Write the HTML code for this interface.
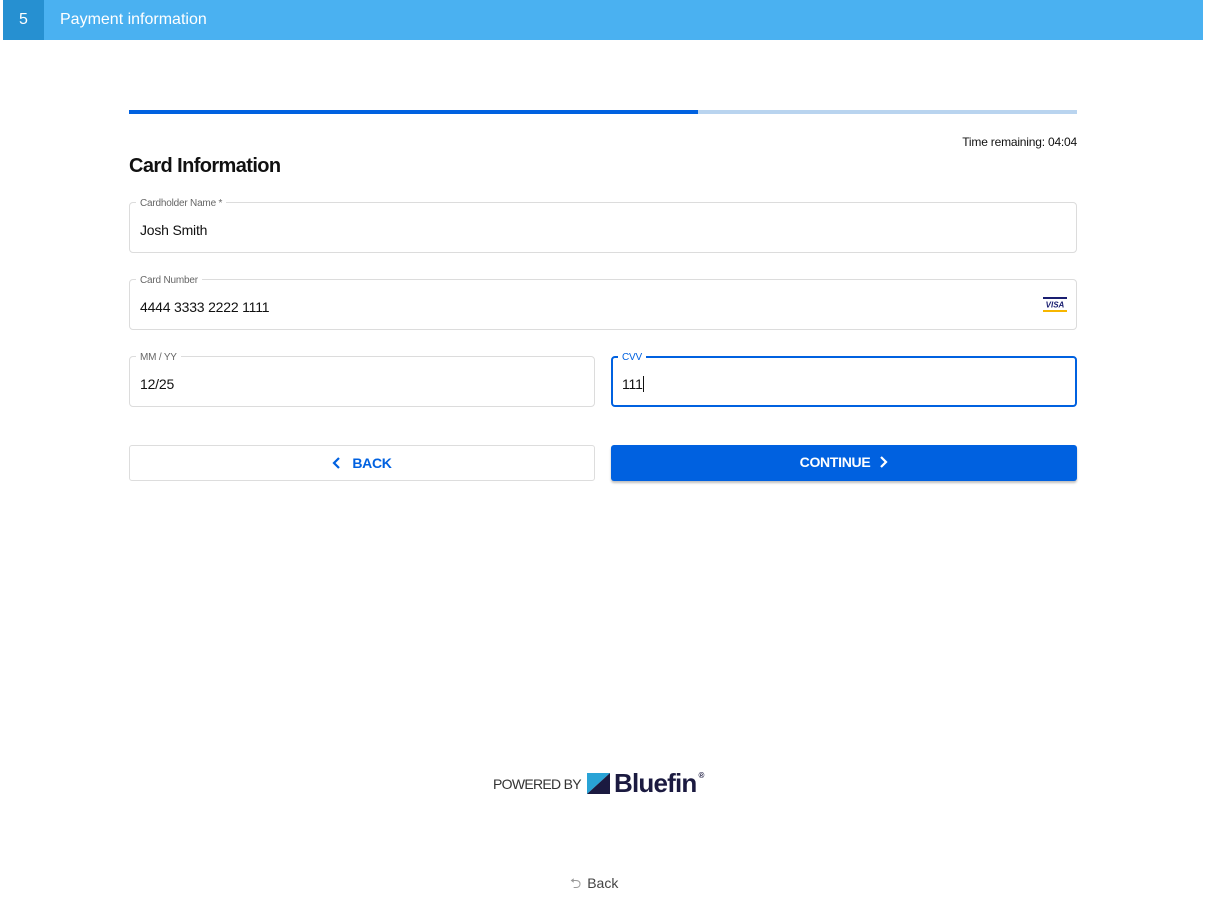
<!DOCTYPE html>
<html><head><meta charset="utf-8"><style>
*{box-sizing:border-box;margin:0;padding:0}
body{width:1211px;height:920px;background:#fff;font-family:"Liberation Sans",Arial,sans-serif;position:relative;overflow:hidden;color:#111}
.hdr{position:absolute;left:3px;top:0;width:1200px;height:40px;background:#4ab1f1}
.num{position:absolute;left:0;top:0;width:41px;height:40px;background:#2690d1;color:#fff;font-size:16px;line-height:40px;text-align:center}
.ttl{position:absolute;left:57px;top:0;line-height:40px;color:#fff;font-size:16px}
.prog{position:absolute;left:129px;top:110px;width:948px;height:4px;background:#b9d4ef}
.prog div{width:569px;height:4px;background:#0061e0}
.time{position:absolute;right:134px;top:135px;font-size:12px;color:#111;letter-spacing:-0.2px}
h2{position:absolute;left:129px;top:155px;font-size:20px;font-weight:bold;color:#111;letter-spacing:-0.6px}
.f{position:absolute;border:1px solid #dcdcdc;border-radius:4px;height:51px}
.f .l{position:absolute;left:6px;top:-5px;background:#fff;padding:0 4px;font-size:10px;color:#666;line-height:12px;letter-spacing:-0.2px}
.f .v{position:absolute;left:10px;top:19px;font-size:14px;color:#111;letter-spacing:-0.2px}
.f.a{border:2px solid #0061e0}
.f.a .l{color:#0061e0;left:5px;top:-6px}
.f.a .v{left:9px;top:18px}
.btn{position:absolute;top:445px;height:36px;width:466px;border-radius:3px;font-size:14px;font-weight:bold;text-align:center;line-height:35px;letter-spacing:-0.3px}
.back{left:129px;border:1px solid #ddd;color:#0061e0}
.cont{left:611px;background:#0061e0;color:#fff;box-shadow:0 2px 2px rgba(0,0,0,.25)}
</style></head><body>
<div class="hdr"><div class="num">5</div><div class="ttl">Payment information</div></div>
<div class="prog"><div></div></div>
<div class="time">Time remaining: 04:04</div>
<h2>Card Information</h2>
<div class="f" style="left:129px;top:202px;width:948px"><span class="l">Cardholder Name *</span><span class="v">Josh Smith</span></div>
<div class="f" style="left:129px;top:279px;width:948px"><span class="l">Card Number</span><span class="v">4444 3333 2222 1111</span>
<svg style="position:absolute;left:912px;top:16px" width="26" height="17" viewBox="0 0 26 17"><rect x="1" y="1" width="24" height="2" fill="#1a1f71"/><text x="13" y="11.5" text-anchor="middle" font-family="Liberation Sans" font-weight="bold" font-style="italic" font-size="8" fill="#1a1f71">VISA</text><rect x="1" y="14" width="24" height="2" fill="#f7b600"/></svg></div>
<div class="f" style="left:129px;top:356px;width:466px"><span class="l">MM / YY</span><span class="v">12/25</span></div>
<div class="f a" style="left:611px;top:356px;width:466px"><span class="l">CVV</span><span class="v">111<span style="display:inline-block;width:1px;height:16px;background:#111;vertical-align:-3px"></span></span></div>
<div class="btn back"><svg width="10" height="12" viewBox="0 0 10 12" style="vertical-align:-1px;margin-right:10px"><path d="M7 1L2 6l5 5" stroke="#0061e0" stroke-width="2.2" fill="none"/></svg>BACK</div>
<div class="btn cont">CONTINUE<svg width="10" height="12" viewBox="0 0 10 12" style="vertical-align:-1px;margin-left:8px"><path d="M3 1l5 5-5 5" stroke="#fff" stroke-width="2.2" fill="none"/></svg></div>
<div style="position:absolute;left:493px;top:776px;font-size:14px;color:#333;letter-spacing:-0.7px">POWERED BY</div>
<svg style="position:absolute;left:587px;top:773px" width="23" height="21" viewBox="0 0 23 21"><polygon points="0,0 23,0 0,21" fill="#29a3d6"/><polygon points="23,0 23,21 0,21" fill="#1b1a40"/></svg>
<div style="position:absolute;left:614px;top:768px;font-size:26px;font-weight:bold;color:#1b1a40;letter-spacing:-0.8px">Bluefin<sup style="font-size:8px;vertical-align:14px;margin-left:2px">®</sup></div>
<div style="position:absolute;left:570px;top:873px;font-size:14px;color:#444"><span style="color:#999;margin-right:6px">⮌</span>Back</div>
</body></html>
